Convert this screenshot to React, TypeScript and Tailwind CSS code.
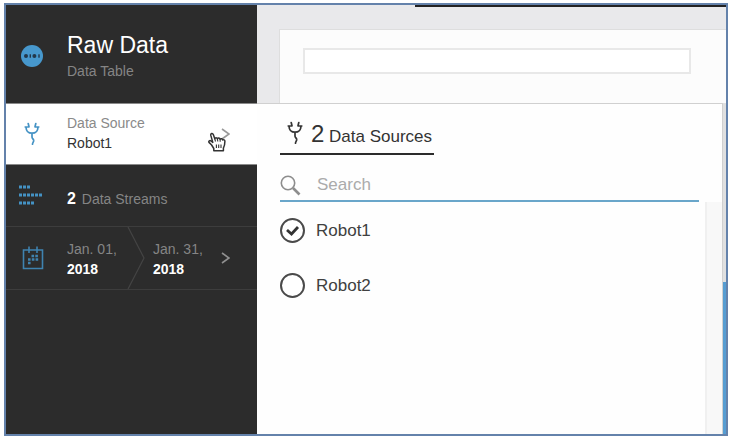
import { useState } from 'react';

function PlugIcon({ className }: { className: string }) {
  return (
    <svg viewBox="0 0 16 24" width="16" height="24" fill="none" stroke="currentColor" strokeWidth="1.7" strokeLinecap="round" strokeLinejoin="round" className={className} aria-hidden="true">
      <path d="M4.200 1.500l.8 3.300-3.800.2M11.800 1.500l-.8 3.300 3.800.2M2 5.200c.2 3.800 2.600 6 6 6s5.800-2.200 6-6M8 11.400v3.500c0 1.900 1.900 2.200 1.700 4-.2 1.400-1.200 1.800-1.200 3.300" />
    </svg>
  );
}

function RawDataIcon() {
  return (
    <svg viewBox="0 0 22 22" width="22" height="22" aria-hidden="true">
      <circle cx="11" cy="11" r="11" fill="#4798cd" />
      <g fill="#23384a">
        <circle cx="5" cy="11" r="2" />
        <rect x="8.600" y="9.300" width="1.400" height="3.400" />
        <circle cx="13.400" cy="11" r="2" />
        <rect x="17.300" y="9.300" width="1.400" height="3.400" />
      </g>
    </svg>
  );
}

function StreamsIcon() {
  return (
    <svg viewBox="0 0 24 20" width="24" height="20" fill="none" stroke="#4492c4" strokeWidth="3" strokeDasharray="3 1" aria-hidden="true">
      <path d="M0 2h11M0 10h23M0 18h15" />
    </svg>
  );
}

function CalendarIcon() {
  return (
    <svg viewBox="0 0 22 24" width="22" height="24" fill="none" stroke="#3f83b0" strokeWidth="1.600" aria-hidden="true">
      <path d="M1.500 4h19v18.500h-19zM7 .5v6.500M15 .5v6.500" />
      <path d="M9.500 10h7M6 13.500h10.500M6 17h3" strokeWidth="2.600" strokeDasharray="2.600 1.200" />
    </svg>
  );
}

function Chevron({ className }: { className: string }) {
  return (
    <svg viewBox="0 0 9 12" width="9" height="12" fill="none" stroke="currentColor" strokeWidth="1.600" className={className} aria-hidden="true">
      <path d="M1 1l7 5-7 5" />
    </svg>
  );
}

function HandCursor() {
  return (
    <svg viewBox="0 0 18 20" width="18" height="20" fill="#fff" stroke="#333" strokeWidth="1.500" strokeLinejoin="round" className="absolute top-7 left-[202px]" aria-hidden="true">
      <path d="M5.800 18.800v-2.300L3.600 13 1 10.400c-.7-1.200.8-2.300 2-1.400l1.800 1.400-2-7C2.400 1.300 4.600.7 5.300 2.600L6.800 6.800c.3-1.500 2.200-1.500 2.600 0 .6-1.200 2.300-1 2.700.4.800-1 2.400-.6 2.500.8.900-.7 2.300-.2 2.300 1.200 0 3.200-.2 4.400-1.500 6.900v2.700z" />
      <path d="M6.800 6.800l.7 2.700M9.400 6.800l.4 2.700M12.100 7.200l.1 2.500M8.400 12.500v3.500M10.700 12.500v3.500M13 12.500v3.500" strokeWidth="1.100" />
    </svg>
  );
}

function SearchIcon() {
  return (
    <svg viewBox="0 0 21 21" width="21" height="21" fill="none" stroke="#8d8d8d" aria-hidden="true">
      <circle cx="8" cy="8" r="6.700" strokeWidth="1.600" />
      <path d="M13 13l6.500 6.500" strokeWidth="2.600" />
    </svg>
  );
}

type SourceProps = { name: string; checked: boolean; onChange: () => void };

function SourceOption({ name, checked, onChange }: SourceProps) {
  return (
    <label className="flex items-center gap-[11px] text-[17px] leading-6 text-[#404040]">
      <span className="relative flex">
        <input type="checkbox" checked={checked} onChange={onChange} className="size-[25px] appearance-none rounded-full border-2 border-[#4a4a4a] bg-white" />
        {checked && (
          <svg viewBox="0 0 25 25" fill="none" stroke="#333" strokeWidth="2.800" className="pointer-events-none absolute inset-0" aria-hidden="true">
            <path d="M7 12l4.500 4 6.500-7" />
          </svg>
        )}
      </span>
      {name}
    </label>
  );
}

function Sidebar() {
  return (
    <aside className="flex w-[251px] shrink-0 flex-col bg-[#2c2c2c] text-sm leading-5 text-[#858585]">
      <header className="flex h-[98px] items-center pt-1">
        <span className="flex w-[61px] shrink-0 pl-[15px]"><RawDataIcon /></span>
        <div>
          <h1 className="text-[23px] leading-7 text-white">Raw Data</h1>
          <p className="pt-0.5">Data Table</p>
        </div>
      </header>
      <nav className="flex flex-col">
        <button type="button" className="relative flex h-[62px] items-center border-y border-[#8a8a8a] bg-white text-left">
          <span className="w-[61px] shrink-0 pl-[18px] text-[#4492c4]"><PlugIcon className="" /></span>
          <span className="flex flex-1 flex-col pb-0.5">
            <span className="text-[#8a8a8a]">Data Source</span>
            <span className="text-[#333]">Robot1</span>
          </span>
          <Chevron className="mr-[27px] text-[#999]" />
          <HandCursor />
        </button>
        <button type="button" className="flex h-[62px] items-center border-b border-[#3d3d3d] pt-1.5 text-left">
          <span className="flex w-[61px] shrink-0 pb-2 pl-[13px]"><StreamsIcon /></span>
          <span><b className="mr-0.5 text-base leading-5 text-white">2</b> Data Streams</span>
        </button>
        <button type="button" className="flex h-[63px] items-center border-b border-[#3d3d3d] text-left">
          <span className="w-[61px] shrink-0 pl-4"><CalendarIcon /></span>
          <span className="flex w-[60px] flex-col pt-0.5">Jan. 01,<b className="text-white">2018</b></span>
          <svg viewBox="0 0 18 62" width="18" height="62" fill="none" stroke="#444" strokeWidth="1.200" className="shrink-0" aria-hidden="true">
            <path d="M1 0l16 31L1 62" />
          </svg>
          <span className="flex flex-1 flex-col pt-0.5 pl-2">Jan. 31,<b className="text-white">2018</b></span>
          <Chevron className="mr-[27px] text-[#909090]" />
        </button>
      </nav>
    </aside>
  );
}

export default function App() {
  const [selected, setSelected] = useState<string[]>(['Robot1']);
  const toggle = (name: string) =>
    setSelected((now) => (now.includes(name) ? now.filter((n) => n !== name) : [...now, name]));

  return (
    <div className="flex min-h-screen bg-white pt-[3px] pr-[3px] pb-[5px] pl-1 font-['Liberation_Sans',Arial,sans-serif]">
      <div className="flex flex-1 border-2 border-[#6482ab]">
        <Sidebar />
        <main className="flex min-w-0 flex-1 flex-col bg-[#e9e9eb]">
          <div className="ml-[158px] h-0.5 bg-[#222]" />
          <section className="mt-[22px] ml-[22px] h-[74px] border-t border-l border-[#dedede] bg-[#fcfcfc] pt-[18px] pr-[35px] pl-[23px]">
            <input type="text" aria-label="Table title" className="block h-[26px] w-full border-2 border-[#e8e8e8] bg-white" />
          </section>
          <div className="flex flex-1">
            <section className="flex flex-1 flex-col border-t border-r border-[#d0d0d0] bg-[#fefefe] pl-[23px]">
              <h2 className="flex h-[51px] items-center self-start border-b-2 border-[#2c2c2c] pt-2 pr-0.5 pl-[7px] text-[#333]">
                <PlugIcon className="mr-2" />
                <span className="pt-1.5 text-[17px] leading-7"><span className="text-2xl leading-7">2</span> Data Sources</span>
              </h2>
              <div className="flex flex-1">
                <div className="flex-1">
                  <label className="mt-[15px] flex h-8 items-center gap-4 border-b-2 border-[#69a6ca]">
                    <SearchIcon />
                    <input type="search" aria-label="Search" placeholder="Search" className="min-w-0 flex-1 bg-transparent text-[17px] leading-6 outline-none placeholder:text-[#ababab]" />
                  </label>
                  <div className="flex flex-col gap-[30px] pt-4">
                    {['Robot1', 'Robot2'].map((name) => (
                      <SourceOption key={name} name={name} checked={selected.includes(name)} onChange={() => toggle(name)} />
                    ))}
                  </div>
                </div>
                <div className="mt-[47px] ml-[6px] w-[17px] border-l-2 border-[#f0f0f0] bg-[#f8f8f8]" />
              </div>
            </section>
            <div className="flex w-[3px] flex-col bg-[#e0e0e0]">
              <div className="mt-[179px] flex-1 bg-[#569dd2]" />
            </div>
          </div>
        </main>
      </div>
    </div>
  );
}
